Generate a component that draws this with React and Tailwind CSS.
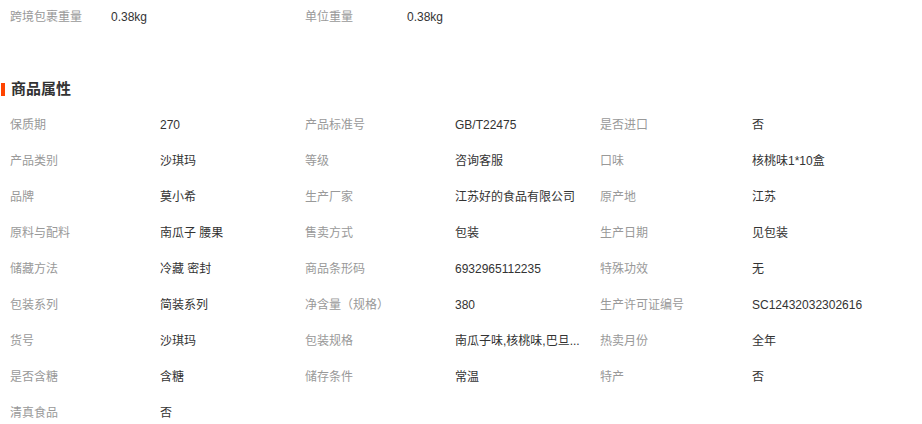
import React from "react";

const ATTRS = [
  ["保质期", "270"],
  ["产品标准号", "GB/T22475"],
  ["是否进口", "否"],
  ["产品类别", "沙琪玛"],
  ["等级", "咨询客服"],
  ["口味", "核桃味1*10盒"],
  ["品牌", "莫小希"],
  ["生产厂家", "江苏好的食品有限公司"],
  ["原产地", "江苏"],
  ["原料与配料", "南瓜子 腰果"],
  ["售卖方式", "包装"],
  ["生产日期", "见包装"],
  ["储藏方法", "冷藏 密封"],
  ["商品条形码", "6932965112235"],
  ["特殊功效", "无"],
  ["包装系列", "简装系列"],
  ["净含量（规格）", "380"],
  ["生产许可证编号", "SC12432032302616"],
  ["货号", "沙琪玛"],
  ["包装规格", "南瓜子味,核桃味,巴旦..."],
  ["热卖月份", "全年"],
  ["是否含糖", "含糖"],
  ["储存条件", "常温"],
  ["特产", "否"],
  ["清真食品", "否"],
];

const App = () => {
  return (
    <div
      className="w-[922px] h-[424px] overflow-hidden bg-white text-[12px]"
      style={{ fontFamily: '"Liberation Sans", "Noto Sans CJK SC", sans-serif' }}
    >
      {/* Logistics */}
      <div className="flex h-[34px] items-center pl-[10px]">
        <div className="flex w-[295px]">
          <span className="w-[101px] text-[#999]">跨境包裹重量</span>
          <span className="text-[#333]">0.38kg</span>
        </div>
        <div className="flex">
          <span className="w-[102px] text-[#999]">单位重量</span>
          <span className="text-[#333]">0.38kg</span>
        </div>
      </div>

      {/* Heading */}
      <div className="mt-[43px] flex h-[24px] items-center">
        <span className="ml-[1px] h-[13px] w-[4px] bg-[#ff4400]" />
        <h2 className="ml-[6px] text-[15px] font-bold text-[#333]">商品属性</h2>
      </div>

      {/* Attributes */}
      <div className="mt-[6px] grid grid-cols-[295px_295px_300px] pl-[10px]">
        {ATTRS.map(([label, value], i) => (
          <div key={i} className="flex h-[36px] items-center">
            <span className={`${i % 3 === 2 ? "w-[152px]" : "w-[150px]"} shrink-0 text-[#999]`}>
              {label}
            </span>
            <span className="whitespace-nowrap text-[#333]">{value}</span>
          </div>
        ))}
      </div>
    </div>
  );
};

export default App;
